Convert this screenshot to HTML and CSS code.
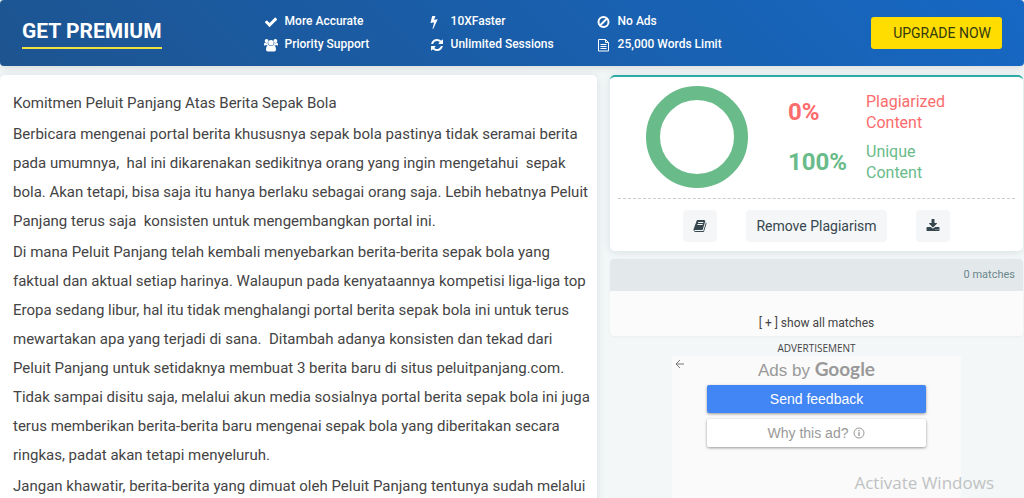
FILE: index.html
```html
<!DOCTYPE html>
<html lang="id">
<head>
<meta charset="utf-8">
<meta name="viewport" content="width=device-width, initial-scale=1">
<title>Plagiarism Checker</title>
<link rel="stylesheet" href="styles.css">
</head>
<body>
<header class="premium">
  <h1 class="premium-title">GET PREMIUM</h1>
  <ul class="features">
    <li><svg class="icon" viewBox="0 0 1792 1792"><path d="M1671 566q0 40-28 68l-724 724-136 136q-28 28-68 28t-68-28l-136-136-362-362q-28-28-28-68t28-68l136-136q28-28 68-28t68 28l294 295 656-657q28-28 68-28t68 28l136 136q28 28 28 68z"/></svg>More Accurate</li>
    <li><svg class="icon" viewBox="0 0 1792 1792"><path d="M1333 566q18 20 7 44l-540 1157q-13 25-42 25-4 0-14-2-17-5-25.500-19t-4.500-30l197-808-406 101q-4 1-12 1-18 0-31-11-18-15-13-39l201-825q4-14 16-23t28-9h328q19 0 32 12.500t13 29.500q0 8-5 18l-171 463 396-98q8-2 12-2 19 0 34 15z" transform="translate(-380 0)"/></svg>10XFaster</li>
    <li><svg class="icon" viewBox="0 0 14 14"><g fill="none" stroke="currentColor" stroke-width="2"><circle cx="6.500" cy="7" r="5"/><path d="M3 10.500l7-7"/></g></svg>No Ads</li>
    <li><svg class="icon" viewBox="0 0 14 14"><circle cx="2.600" cy="3" r="1.900"/><circle cx="11.400" cy="3" r="1.900"/><path d="M0 8V6.500C0 5 .8 4.500 1.500 4.700q1.200.9 2.300.2Q3.900 6.400 4.700 7.300H1Q0 7.500 0 8zM14 8V6.500c0-1.500-.8-2-1.500-1.800q-1.200.9-2.300.2-.1 1.500-.9 2.400H13q1 .2 1 .7z"/><circle cx="7" cy="4.700" r="2.700"/><path d="M4.500 7q2.500 2 5 0Q11.700 7 12 11.500q0 2-1.800 2H3.800q-1.800 0-1.800-2Q2.300 7 4.500 7z"/></svg>Priority Support</li>
    <li><svg class="icon" viewBox="0 0 1792 1792"><path d="M1639 1056q0 5-1 7-64 268-268 434.500t-478 166.500q-146 0-282.500-55t-243.500-157l-129 129q-19 19-45 19t-45-19-19-45v-448q0-26 19-45t45-19h448q26 0 45 19t19 45-19 45l-137 137q71 66 161 102t187 36q134 0 250-65t186-179q11-17 53-117 8-23 30-23h192q13 0 22.500 9.500t9.500 22.500zm25-800v448q0 26-19 45t-45 19h-448q-26 0-45-19t-19-45 19-45l138-138q-148-137-349-137-134 0-250 65t-186 179q-11 17-53 117-8 23-30 23h-199q-13 0-22.500-9.500t-9.500-22.500v-7q65-268 270-434.500t480-166.500q146 0 284 55.500t245 156.500l130-129q19-19 45-19t45 19 19 45z"/></svg>Unlimited Sessions</li>
    <li><svg class="icon" viewBox="0 0 14 14"><path fill="none" stroke="currentColor" d="M1.500 1.500h7l3 3v8.500h-10zM8.500 1.500v3h3M3.500 6.500h6M3.500 8.500h6M3.500 10.500h6"/></svg>25,000 Words Limit</li>
  </ul>
  <button class="upgrade" type="button">UPGRADE NOW</button>
</header>
<main class="layout">
  <article class="card article">
    <p>Komitmen Peluit Panjang Atas Berita Sepak Bola</p>
    <p>Berbicara mengenai portal berita khususnya sepak bola pastinya tidak seramai berita pada umumnya,  hal ini dikarenakan sedikitnya orang yang ingin mengetahui  sepak bola. Akan tetapi, bisa saja itu hanya berlaku sebagai orang saja. Lebih hebatnya Peluit Panjang terus saja  konsisten untuk mengembangkan portal ini.</p>
    <p>Di mana Peluit Panjang telah kembali menyebarkan berita-berita sepak bola yang faktual dan aktual setiap harinya. Walaupun pada kenyataannya kompetisi liga-liga top Eropa sedang libur, hal itu tidak menghalangi portal berita sepak bola ini untuk terus mewartakan apa yang terjadi di sana.  Ditambah adanya konsisten dan tekad dari Peluit Panjang untuk setidaknya membuat 3 berita baru di situs peluitpanjang.com. Tidak sampai disitu saja, melalui akun media sosialnya portal berita sepak bola ini juga terus memberikan berita-berita baru mengenai sepak bola yang diberitakan secara ringkas, padat akan tetapi menyeluruh.</p>
    <p>Jangan khawatir, berita-berita yang dimuat oleh Peluit Panjang tentunya sudah melalui</p>
  </article>
  <aside class="sidebar">
    <section class="card result">
      <div class="summary">
        <svg class="donut" viewBox="0 0 102 102" role="img" aria-label="100% unique"><circle cx="51" cy="51" r="44" fill="none" stroke="#69bb8a" stroke-width="14"/></svg>
        <dl class="scores">
          <dt class="plagiarized">0%</dt><dd class="plagiarized">Plagiarized Content</dd>
          <dt class="unique">100%</dt><dd class="unique">Unique Content</dd>
        </dl>
      </div>
      <div class="actions">
        <button type="button" aria-label="Report"><svg class="icon" viewBox="0 0 1792 1792"><path d="M1703 478q40 57 18 129l-275 906q-19 64-76.500 107.500t-122.500 43.500h-923q-77 0-148.500-53.500t-99.500-131.500q-24-67-2-127 0-4 3-27t4-37q1-8-3-21.500t-3-19.500q2-11 8-21t16.500-23.500 16.500-23.500q23-38 45-91.500t30-91.500q3-10 .5-30t-.5-28q3-11 17-28t17-23q21-36 42-92t25-90q1-9-2.500-32t.5-28q4-13 22-30.500t22-22.500q19-26 42.500-84.500t27.500-96.500q1-8-3-25.500t-2-26.500q2-8 9-18t18-23 17-21q8-12 16.500-30.500t15-35 16-36 19.500-32 26.500-23.500 36-11.500 47.500 5.500l-1 3q38-9 51-9h761q74 0 114 56t18 130l-274 906q-36 119-71.500 153.500t-128.500 34.500h-869q-27 0-38 15-11 16-1 43 24 70 144 70h923q29 0 56-15.500t35-41.500l300-987q7-22 5-57 38 15 59 43zm-1064 2q-4 13 2 22.500t20 9.500h608q13 0 25.500-9.500t16.500-22.500l21-64q4-13-2-22.500t-20-9.500h-608q-13 0-25.500 9.500t-16.500 22.500zm-83 256q-4 13 2 22.500t20 9.500h608q13 0 25.500-9.500t16.500-22.500l21-64q4-13-2-22.500t-20-9.500h-608q-13 0-25.500 9.500t-16.500 22.500z"/></svg></button>
        <button type="button">Remove Plagiarism</button>
        <button type="button" aria-label="Download"><svg class="icon" viewBox="0 0 1792 1792"><path d="M1344 1344q0-26-19-45t-45-19-45 19-19 45 19 45 45 19 45-19 19-45zm256 0q0-26-19-45t-45-19-45 19-19 45 19 45 45 19 45-19 19-45zm128-224v320q0 40-28 68t-68 28h-1472q-40 0-68-28t-28-68v-320q0-40 28-68t68-28h465l135 136q58 56 136 56t136-56l136-136h464q40 0 68 28t28 68zm-325-569q17 41-14 70l-448 448q-18 19-45 19t-45-19l-448-448q-31-29-14-70 17-39 59-39h256v-448q0-26 19-45t45-19h256q26 0 45 19t19 45v448h256q42 0 59 39z"/></svg></button>
      </div>
    </section>
    <section class="matches">
      <div class="matches-head">0 matches</div>
      <button class="show-all" type="button">[ + ] show all matches</button>
    </section>
    <section class="advert">
      <div class="advert-label">ADVERTISEMENT</div>
      <div class="advert-box">
        <button class="back" type="button" aria-label="Back"><svg viewBox="0 0 10 10"><path fill="none" stroke="currentColor" d="M9 5H1M5 1L1 5l4 4"/></svg></button>
        <div class="ads-by">Ads by <span class="google">Google</span></div>
        <button class="ad-button feedback" type="button">Send feedback</button>
        <button class="ad-button why" type="button">Why this ad? <svg viewBox="0 0 12 12"><circle cx="6" cy="6" r="5" fill="none" stroke="currentColor"/><path d="M5.300 5.200h1.400v3.800H5.300zM5.300 3h1.400v1.300H5.300z"/></svg></button>
      </div>
    </section>
  </aside>
</main>
<div class="watermark">Activate Windows</div>
</body>
</html>
```
FILE: styles.css
```css
* { box-sizing: border-box; }
body {
  margin: 0;
  height: 100vh;
  overflow: hidden;
  background: #f3f7f8;
  color: #444;
  font-family: Roboto, "Liberation Sans", sans-serif;
}
button { border: 0; padding: 0; font: inherit; color: inherit; cursor: pointer; }
svg { fill: currentColor; }
.icon { width: 14px; height: 14px; flex: none; }

.premium {
  display: flex;
  align-items: center;
  height: 66px;
  padding: 0 22px;
  border-radius: 4px;
  background: linear-gradient(45deg, #1d5490, #1668c4);
  box-shadow: 0 1px 8px rgba(0, 0, 0, .14);
  color: #fff;
}
.premium-title {
  margin: 0 102px 0 0;
  padding-bottom: 3px;
  border-bottom: 2px solid #f2e03c;
  font-size: 21px;
  line-height: 26px;
  font-weight: 700;
  white-space: nowrap;
}
.features {
  display: grid;
  grid-template-columns: 166px 167px auto;
  margin: 0 auto 0 0;
  padding: 0;
  list-style: none;
  font-size: 12px;
  line-height: 23px;
  font-weight: 500;
  white-space: nowrap;
}
.features li { display: flex; align-items: center; gap: 7px; }
.upgrade {
  height: 32px;
  padding: 0 11px 0 22px;
  border-radius: 3px;
  background: #fd0;
  color: #333a10;
  font-size: 14px;
  white-space: nowrap;
}

.layout {
  display: grid;
  grid-template-columns: 597fr 413fr;
  gap: 13px;
  padding: 9px 1px 0 0;
  align-items: start;
}
.card {
  border-radius: 5px;
  background: #fff;
  box-shadow: 0 1px 8px rgba(40, 90, 100, .14);
}
.article {
  padding: 14px 5px 24px 13px;
  font-size: 15px;
  line-height: 29px;
}
.article p { margin: 0 0 2px; white-space: pre-wrap; }

.result { padding: 9px 8px; border-top: 2px solid #2aaba4; }
.summary { display: flex; padding-left: 28px; height: 113px; border-bottom: 1px dashed #ccc; }
.donut { width: 102px; height: 102px; margin-right: 40px; flex: none; }
.scores {
  display: grid;
  grid-template-columns: 78px 90px;
  align-content: start;
  align-items: center;
  gap: 8px 0;
  margin: 5px 0 0;
  line-height: 21px;
}
.scores dt { font-size: 24px; font-weight: 700; }
.scores dd { margin: 0; font-size: 16px; }
.plagiarized { color: #fb6c6c; }
.unique { color: #69bb8a; }
.actions { display: flex; justify-content: center; gap: 29px; padding-top: 11px; }
.actions button {
  height: 32px;
  padding: 0 10px;
  border-radius: 4px;
  background: #f4f6f8;
  color: #37474f;
  font-size: 14px;
}
.actions svg { display: block; }

.matches { margin-top: 8px; border-radius: 4px; overflow: hidden; background: #fbfbfb; box-shadow: 0 1px 3px rgba(0, 0, 0, .04); }
.matches-head {
  padding: 0 8px;
  background: #e3e9eb;
  color: #6c868d;
  font-size: 11px;
  line-height: 32px;
  text-align: right;
}
.show-all { display: block; width: 100%; padding: 23px 0 4px; background: none; font-size: 12px; line-height: 18px; }

.advert { margin-top: 5px; text-align: center; }
.advert-label { font: 10px/15px "Open Sans", sans-serif; }
.advert-box {
  position: relative;
  width: 70%;
  min-height: 160px;
  margin: 0 auto;
  padding: 0 35px;
  background: #fafafa;
  color: #999;
  font-family: "Liberation Sans", Arial, sans-serif;
}
.back { position: absolute; left: 3px; top: 3px; background: none; color: #777; }
.back svg { display: block; width: 10px; height: 10px; }
.ads-by { height: 29px; font-size: 17px; line-height: 26px; }
.google { font: 700 19px/26px Lato, sans-serif; }
.ad-button {
  display: flex;
  align-items: center;
  justify-content: center;
  gap: 5px;
  width: 100%;
  height: 28px;
  border-radius: 2px;
  box-shadow: 0 1px 3px rgba(0, 0, 0, .4);
  font-size: 14px;
}
.ad-button svg { width: 12px; height: 12px; }
.feedback { margin-bottom: 6px; background: #4285f4; color: #fff; }
.why { background: #fff; }

.watermark {
  position: absolute;
  right: 30px;
  bottom: 4px;
  color: #bfc2c3;
  font: 17px/22px "Open Sans", sans-serif;
}
```
